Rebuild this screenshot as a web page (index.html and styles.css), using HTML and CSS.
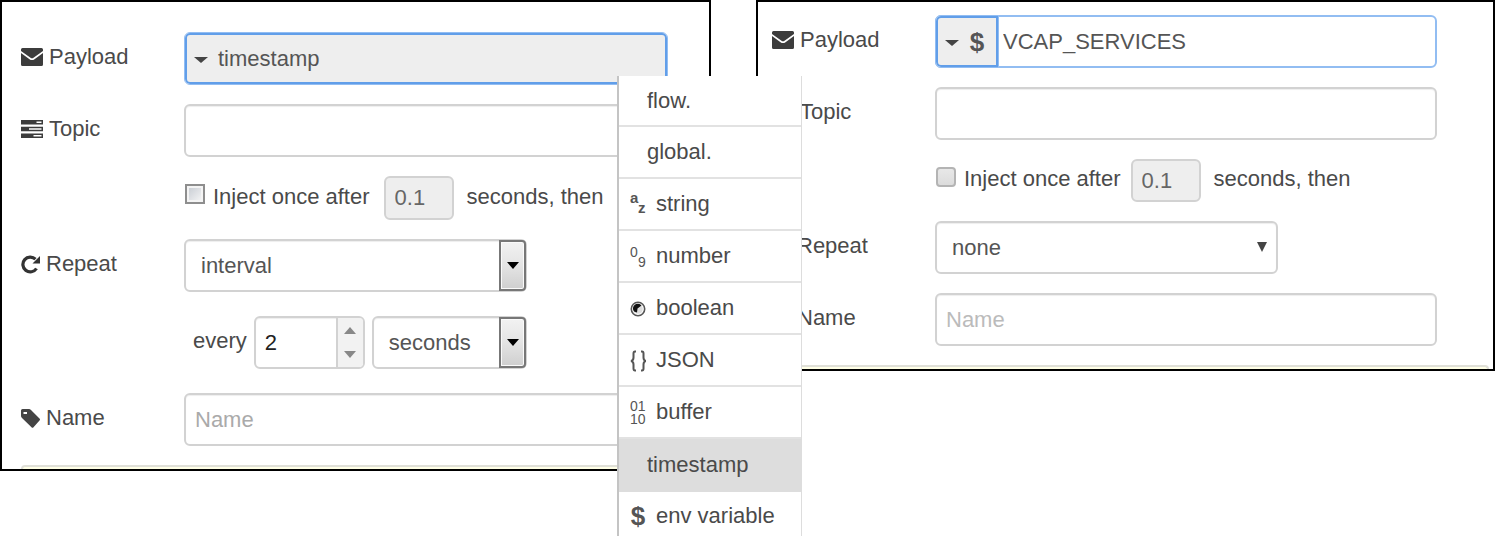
FILE: index.html
```html
<!DOCTYPE html>
<html lang="en">
<head>
<meta charset="utf-8">
<title>Edit inject node</title>
<link rel="stylesheet" href="styles.css">
</head>
<body>
<main class="page">
  <form class="panel panel-left">
    <div class="row">
      <label class="label" for="payload-a"><svg class="icon" width="22" height="18" viewBox="0 0 22 18"><path fill="#3c3c3c" d="M1.5 0h19Q22 0 22 1.5V3L12.500 9.800Q11 10.800 9.500 9.800L0 3V1.500Q0 0 1.500 0zM0 5l8.500 6.200Q11 13 13.500 11.200L22 5v11.500q0 1.500-1.500 1.500h-19Q0 18 0 16.500z"/></svg>Payload</label>
      <div class="field anchor">
        <button class="typed-button" id="payload-a" type="button"><span class="caret"></span>timestamp</button>
        <ul class="menu">
          <li><button type="button" class="plain">flow.</button></li>
          <li><button type="button" class="plain">global.</button></li>
          <li><button type="button"><svg class="type-icon" width="16" height="30" viewBox="0 0 16 30"><text class="glyph-bold" x="0" y="14">a</text><text class="glyph-bold" x="8" y="24">z</text></svg>string</button></li>
          <li><button type="button"><svg class="type-icon" width="16" height="30" viewBox="0 0 16 30"><text class="glyph" x="0" y="16">0</text><text class="glyph" x="8" y="26">9</text></svg>number</button></li>
          <li><button type="button"><svg class="type-icon" width="16" height="26" viewBox="0 0 16 26"><circle cx="8" cy="14" r="6.700" fill="#fff" stroke="#555" stroke-width="1.600"/><circle cx="8" cy="14" r="4.800" fill="#ddd"/><path fill="#111" d="M4 16.500A4.700 4.700 0 0 1 11.500 10.500L7.500 13.500 7 17.500z"/></svg>boolean</button></li>
          <li><button type="button"><svg class="type-icon" width="16" height="26" viewBox="0 0 16 26"><path fill="none" stroke="#555" stroke-width="2" d="M6 4.500H5Q3.500 4.500 3.500 6.500v4Q3.500 13.500 1 14q2.500.5 2.500 3.500v4q0 2 1.500 2h1M11 4.500h1q1.500 0 1.500 2v4q0 3 2.500 3.500-2.500.5-2.500 3.500v4q0 2-1.500 2h-1"/></svg>JSON</button></li>
          <li><button type="button"><svg class="type-icon" width="16" height="30" viewBox="0 0 16 30"><text class="glyph" x="0" y="14">01</text><text class="glyph" x="0" y="27">10</text></svg>buffer</button></li>
          <li><button type="button" class="plain selected">timestamp</button></li>
          <li><button type="button"><span class="dollar">$</span>env variable</button></li>
        </ul>
      </div>
    </div>
    <div class="row">
      <label class="label" for="topic-a"><svg class="icon" width="22" height="18" viewBox="0 0 22 18"><path fill="#3c3c3c" fill-rule="evenodd" d="M0 0h22v4.500H0zM15.500 1.500v1.500h5V1.500zM0 6.800h22v4.500H0zM8 8.300v1.500h12.500V8.300zM0 13.500h22V18H0zM12.500 15v1.500h8V15z"/></svg>Topic</label>
      <div class="field"><input class="input" id="topic-a" type="text"></div>
    </div>
    <div class="row">
      <div class="label"></div>
      <div class="field inject">
        <input class="check check-square" id="once-a" type="checkbox"><label class="once" for="once-a">Inject once after</label>
        <input class="input delay" type="text" value="0.1" aria-label="Delay" disabled><span class="text">seconds, then</span>
      </div>
    </div>
    <div class="row">
      <label class="label" for="repeat-a"><svg class="icon" width="19" height="19" viewBox="0 0 19 19"><path fill="none" stroke="#333" stroke-width="3.200" d="M15.500 13.500A7.400 7.400 0 1 1 14.500 4.200"/><path fill="#333" d="M19 1v7.500h-7.500z"/></svg>Repeat</label>
      <div class="field"><div class="select-box boxed medium"><select class="input select" id="repeat-a"><option>interval</option></select></div></div>
    </div>
    <div class="row row-spaced">
      <div class="label"></div>
      <div class="field every">
        <label class="text" for="every-a">every</label>
        <div class="spinner">
          <input class="input number" id="every-a" type="number" value="2">
          <div class="steps"><button type="button" aria-label="Increase"><span class="up"></span></button><button type="button" aria-label="Decrease"><span class="down"></span></button></div>
        </div>
        <div class="select-box boxed units"><select class="input select" aria-label="Units"><option>seconds</option></select></div>
      </div>
    </div>
    <div class="row row-spaced">
      <label class="label" for="name-a"><svg class="icon" width="19" height="19" viewBox="0 0 19 19"><path fill="#444" fill-rule="evenodd" d="M0 1.500Q0 0 1.500 0H8q1 0 2 1l8.500 8.500q1 1 0 2L12.500 18.300q-1 1-2 0L1 9Q0 8 0 7zM2.500 3v2H6V3z"/></svg>Name</label>
      <div class="field"><input class="input" id="name-a" type="text" placeholder="Name"></div>
    </div>
    <div class="tip"></div>
  </form>

  <form class="panel panel-right">
    <div class="row">
      <label class="label" for="payload-b"><svg class="icon" width="22" height="18" viewBox="0 0 22 18"><path fill="#3c3c3c" d="M1.500 0h19Q22 0 22 1.500V3L12.500 9.800Q11 10.800 9.500 9.800L0 3V1.500Q0 0 1.500 0zM0 5l8.500 6.200Q11 13 13.500 11.200L22 5v11.500q0 1.500-1.500 1.500h-19Q0 18 0 16.500z"/></svg>Payload</label>
      <div class="field typed">
        <button class="typed-button typed-prefix" type="button" aria-label="Payload type"><span class="caret"></span><span class="dollar">$</span></button>
        <input class="typed-value" id="payload-b" type="text" value="VCAP_SERVICES">
      </div>
    </div>
    <div class="row">
      <label class="label" for="topic-b"><svg class="icon" width="22" height="18" viewBox="0 0 22 18"><path fill="#3c3c3c" d="M0 0h22v4H0zM0 7h22v4H0zM0 14h22v4H0z"/></svg>Topic</label>
      <div class="field"><input class="input" id="topic-b" type="text"></div>
    </div>
    <div class="row">
      <div class="label"></div>
      <div class="field inject">
        <input class="check check-round" id="once-b" type="checkbox"><label class="once" for="once-b">Inject once after</label>
        <input class="input delay" type="text" value="0.1" aria-label="Delay" disabled><span class="text">seconds, then</span>
      </div>
    </div>
    <div class="row">
      <label class="label" for="repeat-b"><svg class="icon" width="19" height="19" viewBox="0 0 19 19"><path fill="none" stroke="#333" stroke-width="3" d="M15.500 13.500A7.400 7.400 0 1 1 14.500 4.200"/></svg>Repeat</label>
      <div class="field"><div class="select-box arrowed medium"><select class="input select" id="repeat-b"><option>none</option></select></div></div>
    </div>
    <div class="row">
      <label class="label" for="name-b"><svg class="icon" width="19" height="19" viewBox="0 0 19 19"><path fill="#444" d="M0 0h8l11 10-7 9L0 8z"/></svg>Name</label>
      <div class="field"><input class="input" id="name-b" type="text" placeholder="Name"></div>
    </div>
    <div class="tip"></div>
  </form>
</main>
</body>
</html>
```

FILE: styles.css
```css
*,
*::before,
*::after {
  box-sizing: border-box;
}

body {
  margin: 0;
  background: #fff;
  color: #4a4a4a;
  font: 22px/26px "Liberation Sans", Arial, sans-serif;
}

button,
input,
select {
  margin: 0;
  color: inherit;
  font: inherit;
}

.page {
  display: grid;
  grid-template-columns: minmax(0, 711fr) minmax(0, 739fr);
  align-items: start;
  gap: 45px;
  min-height: 100vh;
}

.panel {
  display: flex;
  flex-direction: column;
  gap: 19px;
  border: 2px solid #000;
}

.panel-left {
  padding: 30px 4px 0 19px;
}

.panel-right {
  padding: 13px 4px 0 14px;
}

.row {
  display: flex;
  align-items: center;
}

.panel-left .row {
  padding-right: 37px;
}

.panel-right .row {
  padding-right: 52px;
}

.row-spaced {
  margin-top: 5px;
}

.label {
  display: flex;
  flex: none;
  align-items: center;
  gap: 6px;
  width: 163px;
  padding-bottom: 3px;
}

.icon {
  flex: none;
}

.field {
  flex: 1;
  min-width: 0;
}

.anchor {
  position: relative;
}

.input {
  display: block;
  width: 100%;
  height: 53px;
  padding: 0 9px;
  border: 2px solid #d2d2d2;
  border-radius: 6px;
  background: #fff;
  box-shadow: inset 0 1px 1px #eee;
}

.input::placeholder {
  color: #aaa;
  opacity: 1;
}

.panel-right .input::placeholder {
  color: #bbb;
}

.typed-button {
  display: flex;
  align-items: center;
  gap: 11px;
  width: 100%;
  height: 53px;
  padding: 0 10px;
  border: 1px solid #92bdf2;
  border-radius: 6px;
  background: #eee;
  box-shadow: inset 0 0 0 2px #619ee9;
  color: #555;
  text-align: left;
}

.caret {
  border: 7px solid transparent;
  border-top: 6px solid #444;
  border-bottom: 0;
}

.typed-button .caret {
  margin: 2px -1px 0;
}

.typed {
  display: flex;
  height: 53px;
  border: 2px solid #92bdf2;
  border-radius: 6px;
}

.typed-prefix {
  flex: none;
  width: 64px;
  height: 53px;
  margin: -2px 0 0 -2px;
  border-radius: 6px 0 0 6px;
}

.typed-value {
  flex: 1;
  min-width: 0;
  padding: 0 4px;
  border: 0;
  border-radius: 6px;
  background: #fff;
  color: #555;
}

.dollar {
  flex: none;
  width: 16px;
  color: #555;
  font-size: 26px;
  font-weight: bold;
  text-align: center;
}

.menu {
  position: absolute;
  z-index: 2;
  top: 44px;
  right: -134px;
  width: 185px;
  margin: 0;
  padding: 0;
  border-right: 1px solid #ddd;
  border-left: 2px solid #c4c4c4;
  background: #fff;
  list-style: none;
}

.menu button {
  display: flex;
  align-items: center;
  gap: 10px;
  width: 100%;
  height: 52px;
  padding: 0 0 0 11px;
  border: 0;
  border-bottom: 2px solid #e2e2e2;
  background: #fff;
  white-space: nowrap;
}

.menu .plain {
  padding-left: 28px;
}

.menu .selected {
  height: 53px;
  border-color: #ddd;
  background: #ddd;
}

.menu li:first-child button {
  height: 51px;
}

.menu li:last-child button {
  height: 44px;
  padding-top: 4px;
  border-bottom: 0;
}

.type-icon {
  flex: none;
}

.glyph {
  fill: #555;
  font-size: 14px;
}

.glyph-bold {
  fill: #555;
  font-size: 15px;
  font-weight: bold;
}

.inject {
  display: flex;
  align-items: center;
}

.check {
  flex: none;
  width: 20px;
  height: 20px;
  margin: 0 8px 8px 1px;
  appearance: none;
}

.check-square {
  border: 2px solid #8e8e8e;
  background: linear-gradient(135deg, #c4c9d0, #f8f8f8);
  box-shadow: inset 0 0 0 2px #f4f4f4;
}

.check-round {
  border: 2px solid #b4b4b4;
  border-radius: 4px;
  background: linear-gradient(#e8e8e8, #dcdcdc);
}

.once,
.text {
  padding-bottom: 3px;
  white-space: nowrap;
}

.once {
  margin-right: 14px;
}

.panel-right .once {
  margin-right: 10px;
}

.delay {
  flex: none;
  width: 70px;
  height: 44px;
  margin-right: 13px;
  background: #eee;
  color: #666;
}

.panel-right .delay {
  height: 43px;
}

.select-box {
  position: relative;
}

.medium {
  max-width: 343px;
}

.select {
  padding: 0 32px 0 15px;
  appearance: none;
  color: #555;
}

.boxed::before {
  content: "";
  position: absolute;
  top: 1px;
  right: 1px;
  bottom: 1px;
  width: 27px;
  border: 2px solid #777;
  border-radius: 0 4px 4px 0;
  background: linear-gradient(#f2f2f2, #e4e4e4 50%, #cfcfcf);
  box-shadow: inset 0 0 0 1px #fafafa;
  pointer-events: none;
}

.boxed::after {
  content: "";
  position: absolute;
  top: 23px;
  right: 8px;
  border: 6px solid transparent;
  border-top: 7px solid #000;
  border-bottom: 0;
  pointer-events: none;
}

.arrowed::after {
  content: "";
  position: absolute;
  top: 21px;
  right: 11px;
  border: 5px solid transparent;
  border-top: 10px solid #444;
  border-bottom: 0;
  pointer-events: none;
}

.every {
  display: flex;
  align-items: center;
  gap: 7px;
  padding-left: 9px;
}

.spinner {
  position: relative;
  width: 111px;
}

.number {
  padding-right: 32px;
  color: #222;
  appearance: textfield;
}

.number::-webkit-inner-spin-button {
  display: none;
}

.steps {
  position: absolute;
  top: 2px;
  right: 2px;
  bottom: 2px;
  display: flex;
  flex-direction: column;
  width: 27px;
  border-left: 2px solid #d2d2d2;
  border-radius: 0 4px 4px 0;
  background: #f2f2f2;
}

.steps button {
  display: flex;
  flex: 1;
  align-items: center;
  justify-content: center;
  padding: 0;
  border: 0;
  background: none;
}

.up,
.down {
  border: 6px solid transparent;
}

.up {
  border-top: 0;
  border-bottom: 7px solid #888;
}

.down {
  border-top: 7px solid #888;
  border-bottom: 0;
}

.units {
  width: 155px;
}

.tip {
  height: 4px;
  border: 2px solid #e0e0d8;
  border-bottom: 0;
  border-radius: 4px 4px 0 0;
  background: #ffffe6;
}
```
